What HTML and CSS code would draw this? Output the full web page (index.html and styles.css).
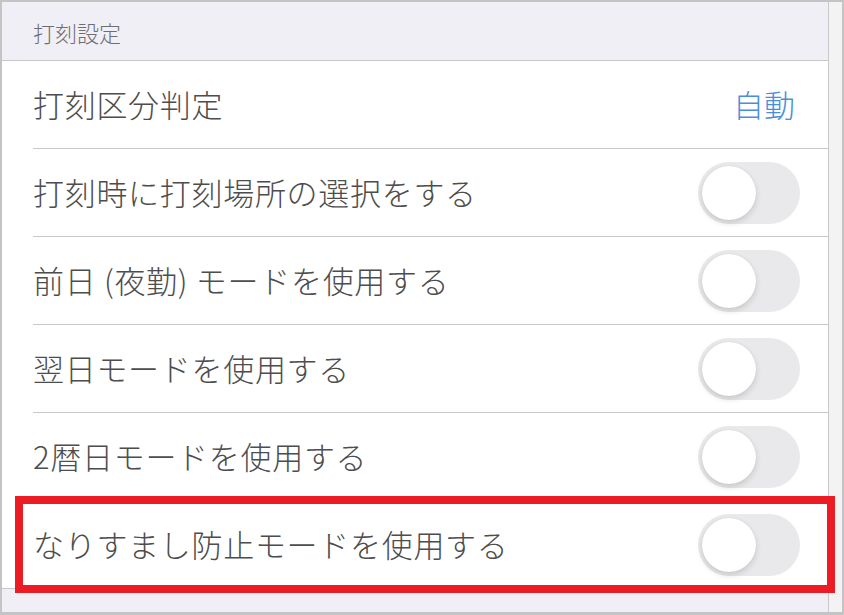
FILE: index.html
```html
<!DOCTYPE html>
<html lang="ja">
<head>
<meta charset="utf-8">
<link rel="stylesheet" href="styles.css">
</head>
<body>
<div class="frame">
  <div class="content">
    <div class="section-header">打刻設定</div>
    <div class="list">
      <div class="row">
        <span class="label">打刻区分判定</span>
        <span class="value">自動</span>
      </div>
      <div class="row">
        <span class="label">打刻時に打刻場所の選択をする</span>
        <span class="toggle"><span class="knob"></span></span>
      </div>
      <div class="row">
        <span class="label">前日 (夜勤) モードを使用する</span>
        <span class="toggle"><span class="knob"></span></span>
      </div>
      <div class="row">
        <span class="label">翌日モードを使用する</span>
        <span class="toggle"><span class="knob"></span></span>
      </div>
      <div class="row">
        <span class="label">2暦日モードを使用する</span>
        <span class="toggle"><span class="knob"></span></span>
      </div>
      <div class="row last">
        <span class="label">なりすまし防止モードを使用する</span>
        <span class="toggle"><span class="knob"></span></span>
      </div>
    </div>
  </div>
  <div class="gutter"></div>
  <div class="highlight"></div>
</div>
</body>
</html>
```

FILE: styles.css
```css
* { box-sizing: border-box; }
html, body { margin: 0; padding: 0; background: #ffffff; }
body {
  font-family: "Noto Sans CJK JP", "Noto Sans", sans-serif;
  color: #4a4a4a;
}
.frame {
  position: relative;
  width: 844px;
  height: 615px;
  border: 2px solid #c4c4c4;
  border-bottom-width: 3px;
  display: flex;
  overflow: hidden;
}
.content {
  flex: 1;
  background: #f0eff5;
  display: flex;
  flex-direction: column;
}
.gutter {
  width: 14px;
  background: #f3f3f3;
  border-left: 1px solid #c9c9c9;
}
.section-header {
  height: 59px;
  border-bottom: 1px solid #c8c7cc;
  padding-left: 31px;
  padding-top: 1px;
  display: flex;
  align-items: center;
  font-size: 22px;
  font-weight: 300;
  color: #6d6d72;
}
.list {
  background: #ffffff;
  border-bottom: 1px solid #c8c7cc;
  padding-left: 31px;
}
.row {
  height: 88px;
  border-bottom: 1px solid #c8c7cc;
  display: flex;
  align-items: center;
  justify-content: space-between;
  padding-right: 28px;
}
.row.last { border-bottom: none; height: 87px; }
.label {
  font-size: 31px;
  font-weight: 300;
  color: #4d4d4d;
  letter-spacing: 0.7px;
  margin-top: -3px;
}
.value {
  font-size: 31px;
  font-weight: 300;
  color: #4a8fdc;
  padding-right: 5px;
  margin-top: -3px;
}
.toggle {
  position: relative;
  width: 102px;
  height: 62px;
  border-radius: 31px;
  background: #e9e9eb;
  flex-shrink: 0;
}
.knob {
  position: absolute;
  left: 4px;
  top: 4px;
  width: 54px;
  height: 54px;
  border-radius: 50%;
  background: #ffffff;
  box-shadow: 0 3px 6px rgba(0,0,0,0.14), 0 0 1px rgba(0,0,0,0.12);
}
.highlight {
  position: absolute;
  left: 13px;
  top: 494px;
  width: 820px;
  height: 97px;
  border: 8px solid #ec1c24;
}
```
